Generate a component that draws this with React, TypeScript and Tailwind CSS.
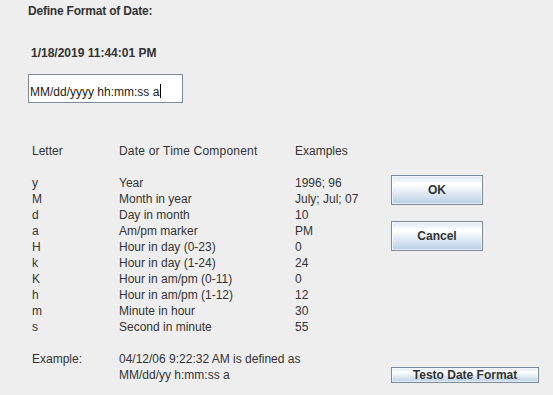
import React from "react"

const rows: [string, string, string][] = [
  ["y", "Year", "1996; 96"],
  ["M", "Month in year", "July; Jul; 07"],
  ["d", "Day in month", "10"],
  ["a", "Am/pm marker", "PM"],
  ["H", "Hour in day (0-23)", "0"],
  ["k", "Hour in day (1-24)", "24"],
  ["K", "Hour in am/pm (0-11)", "0"],
  ["h", "Hour in am/pm (1-12)", "12"],
  ["m", "Minute in hour", "30"],
  ["s", "Second in minute", "55"],
]

const btn =
  "border border-[#7a8a99] bg-[linear-gradient(to_bottom,#dde8f3_0%,#ffffff_30%,#b8cfe5_100%)] font-bold text-[#333333] shadow-[inset_0_0_0_1px_rgba(255,255,255,0.6)] flex items-center justify-center"

export default function App() {
  return (
    <div className="flex h-[395px] w-[553px] overflow-hidden bg-[#eeeeee] font-['Liberation_Sans',Arial,sans-serif] text-[12px] leading-4 text-[#333333]">
      {/* left side */}
      <div className="w-[363px] pl-[28px] pt-[3px]">
        <div className="font-bold tracking-[-0.2px]">Define Format of Date:</div>
        <div className="mt-[26px] pl-[3px] font-bold">1/18/2019 11:44:01 PM</div>

        <div className="mt-[13px] h-[29px] w-[155px] border border-[#7a8a99] bg-white pl-px pt-[7px] text-[#222]">
          MM/dd/yyyy hh:mm:ss a
          <span className="ml-px inline-block h-[14px] w-px translate-y-[2px] bg-black align-baseline" />
        </div>

        <div className="mt-10 pl-1">
          <div className="grid grid-cols-[87px_176px_auto]">
            <span>Letter</span>
            <span className="tracking-[0.2px]">Date or Time Component</span>
            <span>Examples</span>
          </div>

          <div className="mt-4">
            {rows.map(([l, c, e]) => (
              <div key={l + c} className="grid grid-cols-[87px_176px_auto]">
                <span>{l}</span>
                <span>{c}</span>
                <span>{e}</span>
              </div>
            ))}
          </div>

          <div className="mt-4 grid grid-cols-[87px_auto]">
            <span>Example:</span>
            <div>
              <div>04/12/06 9:22:32 AM is defined as</div>
              <div>MM/dd/yy h:mm:ss a</div>
            </div>
          </div>
        </div>
      </div>

      {/* right side */}
      <div className="flex flex-col pb-[12px] pl-[28px] pt-[175px]">
        <button type="button" className={`${btn} h-[30px] w-[92px]`}>OK</button>
        <button type="button" className={`${btn} mt-4 h-[30px] w-[92px]`}>Cancel</button>
        <button type="button" className={`${btn} mt-auto h-4 w-[148px] leading-[14px]`}>
          Testo Date Format
        </button>
      </div>
    </div>
  )
}
